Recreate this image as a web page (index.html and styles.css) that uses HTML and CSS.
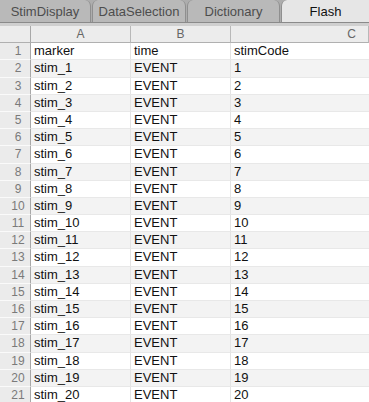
FILE: index.html
```html
<!DOCTYPE html>
<html>
<head>
<meta charset="utf-8">
<link rel="stylesheet" href="styles.css">
</head>
<body>
<div class="tabs">
  <div class="tab t1">StimDisplay</div>
  <div class="tab t2">DataSelection</div>
  <div class="tab t3">Dictionary</div>
  <div class="tab active">Flash</div>
</div>
<div class="sheet">
  <div class="row head"><div class="rn"></div><div class="c a">A</div><div class="c b">B</div><div class="c cc">C</div></div>
  <div class="row"><div class="rn">1</div><div class="c">marker</div><div class="c">time</div><div class="c">stimCode</div></div>
  <div class="row"><div class="rn">2</div><div class="c">stim_1</div><div class="c">EVENT</div><div class="c">1</div></div>
  <div class="row"><div class="rn">3</div><div class="c">stim_2</div><div class="c">EVENT</div><div class="c">2</div></div>
  <div class="row"><div class="rn">4</div><div class="c">stim_3</div><div class="c">EVENT</div><div class="c">3</div></div>
  <div class="row"><div class="rn">5</div><div class="c">stim_4</div><div class="c">EVENT</div><div class="c">4</div></div>
  <div class="row"><div class="rn">6</div><div class="c">stim_5</div><div class="c">EVENT</div><div class="c">5</div></div>
  <div class="row"><div class="rn">7</div><div class="c">stim_6</div><div class="c">EVENT</div><div class="c">6</div></div>
  <div class="row"><div class="rn">8</div><div class="c">stim_7</div><div class="c">EVENT</div><div class="c">7</div></div>
  <div class="row"><div class="rn">9</div><div class="c">stim_8</div><div class="c">EVENT</div><div class="c">8</div></div>
  <div class="row"><div class="rn">10</div><div class="c">stim_9</div><div class="c">EVENT</div><div class="c">9</div></div>
  <div class="row"><div class="rn">11</div><div class="c">stim_10</div><div class="c">EVENT</div><div class="c">10</div></div>
  <div class="row"><div class="rn">12</div><div class="c">stim_11</div><div class="c">EVENT</div><div class="c">11</div></div>
  <div class="row"><div class="rn">13</div><div class="c">stim_12</div><div class="c">EVENT</div><div class="c">12</div></div>
  <div class="row"><div class="rn">14</div><div class="c">stim_13</div><div class="c">EVENT</div><div class="c">13</div></div>
  <div class="row"><div class="rn">15</div><div class="c">stim_14</div><div class="c">EVENT</div><div class="c">14</div></div>
  <div class="row"><div class="rn">16</div><div class="c">stim_15</div><div class="c">EVENT</div><div class="c">15</div></div>
  <div class="row"><div class="rn">17</div><div class="c">stim_16</div><div class="c">EVENT</div><div class="c">16</div></div>
  <div class="row"><div class="rn">18</div><div class="c">stim_17</div><div class="c">EVENT</div><div class="c">17</div></div>
  <div class="row"><div class="rn">19</div><div class="c">stim_18</div><div class="c">EVENT</div><div class="c">18</div></div>
  <div class="row"><div class="rn">20</div><div class="c">stim_19</div><div class="c">EVENT</div><div class="c">19</div></div>
  <div class="row"><div class="rn">21</div><div class="c">stim_20</div><div class="c">EVENT</div><div class="c">20</div></div>
</div>
</body>
</html>
```
FILE: styles.css
```css
html, body { margin: 0; padding: 0; background: #fff; }
body { width: 369px; height: 402px; overflow: hidden; font-family: "Liberation Sans", Arial, sans-serif; }
.tabs { display: flex; height: 22px; background: #adadad; border-bottom: 1px solid #8a8a8a; align-items: stretch; }
.tab { box-sizing: border-box; display: flex; align-items: center; justify-content: center; font-size: 13px; color: #4d4d4d; background: #b9b9b9; border-left: 1px solid #8f8f8f; border-right: 1px solid #8f8f8f; border-radius: 6px 6px 0 0; margin-right: 1px; }
.tab.t1 { width: 91px; border-left: 0; border-radius: 0 6px 0 0; }
.tab.t2 { width: 94px; }
.tab.t3 { width: 93px; }
.tab.active { flex: 1; background: #e6e6e6; color: #111; border-right: 0; margin-right: 0; border-radius: 6px 0 0 0; }
.sheet { border-top: 3px solid #cfcfcf; }
.row { display: flex; height: 17.2px; }
.row .rn { box-sizing: border-box; width: 31px; flex: none; background: #ebebeb; border-right: 1px solid #a8a8a8; border-bottom: 1px solid #fafafa; color: #7a7a7a; font-size: 12px; text-align: center; line-height: 17px; padding-left: 6px; }
.row .c { box-sizing: border-box; width: 100px; flex: none; border-right: 1px solid #e3e3e3; border-bottom: 1px solid #e8e8e8; font-size: 13px; line-height: 16px; padding-left: 3px; color: #111; }
.row .c:last-child { flex: 1; border-right: 0; }
.row:nth-child(odd) .c { background: #f3f3f3; }
.row.head .c, .row.head .rn { background: #ececec; border-bottom: 1px solid #b0b0b0; color: #666; font-size: 12px; text-align: center; padding-left: 0; }
.row.head .c { border-right: 1px solid #b8b8b8; }
.row.head .cc { text-align: right; padding-right: 12px; }
```
